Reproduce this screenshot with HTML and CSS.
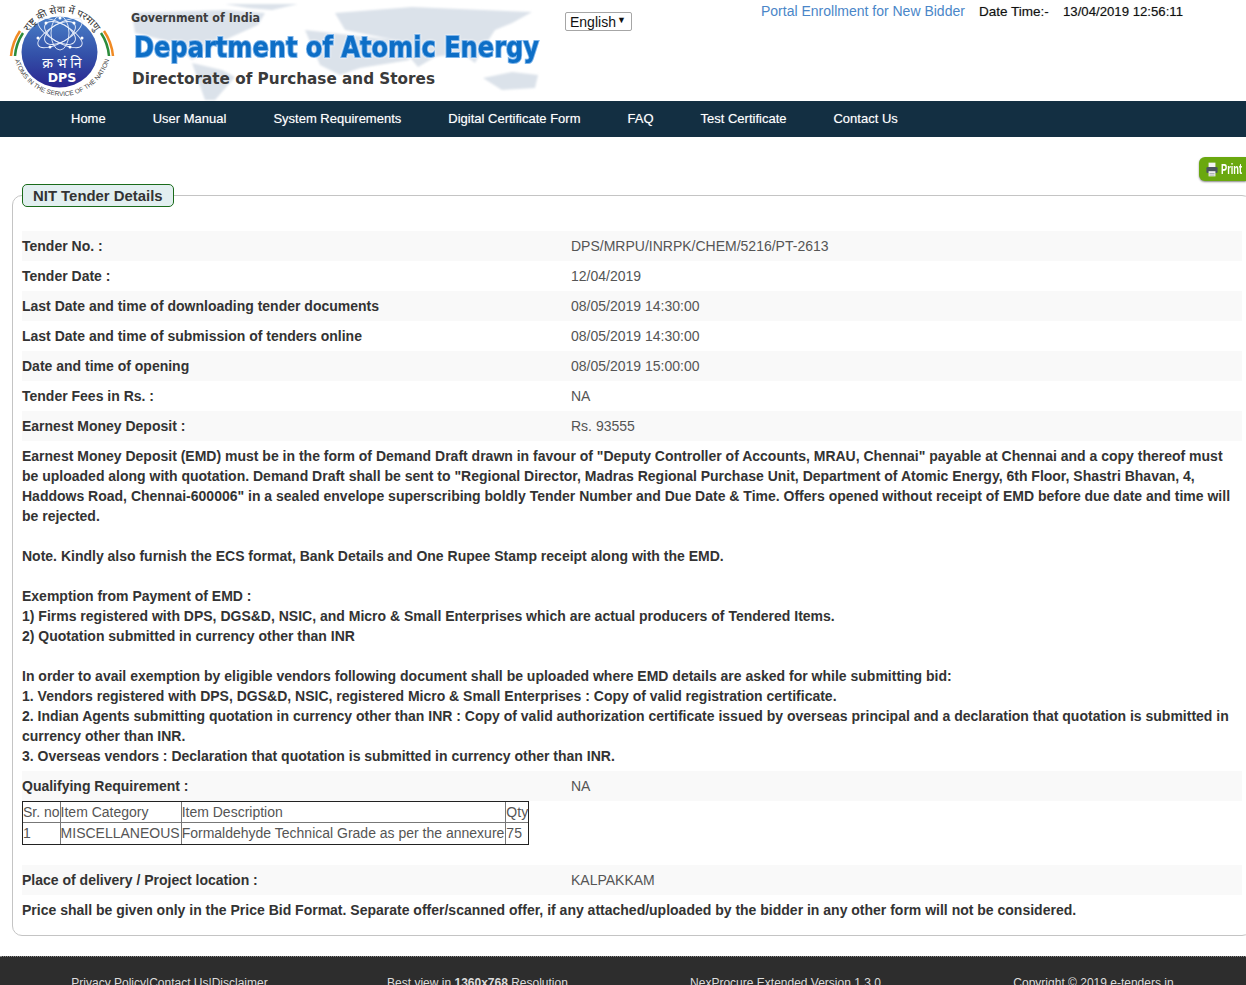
FILE: index.html
```html
<!DOCTYPE html>
<html lang="en">
<head>
<meta charset="utf-8">
<title>NIT Tender Details</title>
<link rel="stylesheet" href="styles.css">
</head>
<body>
<header class="top">
  <svg class="banner" width="545" height="101" viewBox="0 0 545 101" role="img" aria-label="Department of Atomic Energy">
    <defs>
      <linearGradient id="disc" x1="0" y1="0" x2="0" y2="1">
        <stop offset="0" stop-color="#4a7fc8"/>
        <stop offset="0.55" stop-color="#3350a8"/>
        <stop offset="1" stop-color="#2a2590"/>
      </linearGradient>
      <filter id="soft"><feGaussianBlur stdDeviation="0.8"/></filter>
      <path id="arcTop" d="M23 52 A39 39 0 0 1 101 52"/>
      <path id="arcBottom" d="M13 46 A49 50 0 0 0 111 46"/>
    </defs>
    <g class="map" filter="url(#soft)">
      <path d="M225 4 L298 4 L272 10 L248 8 Z"/>
      <path d="M132 13 L225 10 L265 13 L258 25 L218 43 L192 60 L175 43 L135 33 Z"/>
      <path d="M192 63 L222 70 L235 77 L215 100 L205 100 Z"/>
      <path d="M335 13 L412 7 L532 12 L512 23 L495 30 L482 50 L475 63 L462 53 L435 57 L418 67 L395 40 L345 30 Z"/>
      <path d="M305 30 L395 40 L410 60 L360 68 L340 75 L320 65 Z"/>
      <path d="M483 78 L512 72 L538 75 L535 88 L502 90 Z"/>
    </g>
    <g class="logo">
      <path class="arc-orange" d="M11 56 A52 52 0 0 1 20 31"/>
      <path class="arc-green" d="M15 56 A48 48 0 0 1 23 33"/>
      <path class="arc-orange" d="M104 31 A52 52 0 0 1 113 56"/>
      <path class="arc-green" d="M101 33 A48 48 0 0 1 109 56"/>
      <ellipse cx="59.500" cy="52" rx="38" ry="35.500" fill="url(#disc)"/>
      <g class="orbits">
        <ellipse cx="60" cy="33" rx="9" ry="17"/>
        <ellipse cx="60" cy="33" rx="9" ry="17" transform="rotate(60 60 33)"/>
        <ellipse cx="60" cy="33" rx="9" ry="17" transform="rotate(120 60 33)"/>
        <ellipse cx="60" cy="33" rx="25" ry="9" transform="rotate(30 60 33)"/>
        <ellipse cx="60" cy="33" rx="25" ry="9" transform="rotate(150 60 33)"/>
      </g>
      <g class="dots">
        <circle cx="60" cy="18" r="1.500"/><circle cx="46" cy="23" r="1.500"/><circle cx="74" cy="23" r="1.500"/>
        <circle cx="38" cy="38" r="1.500"/><circle cx="82" cy="38" r="1.500"/><circle cx="50" cy="47" r="1.500"/><circle cx="70" cy="47" r="1.500"/>
      </g>
      <text class="logo-hi" x="62" y="68" text-anchor="middle">क्र भं नि</text>
      <text class="logo-dps" x="62" y="82" text-anchor="middle">DPS</text>
      <text class="logo-top"><textPath href="#arcTop" startOffset="50%" text-anchor="middle">राष्ट्र की सेवा में परमाणु</textPath></text>
      <text class="logo-bottom"><textPath href="#arcBottom" startOffset="50%" text-anchor="middle">ATOMS IN THE SERVICE OF THE NATION</textPath></text>
    </g>
    <text class="gov" x="131" y="22" textLength="129" lengthAdjust="spacingAndGlyphs">Government of India</text>
    <text class="dept" x="134" y="57" textLength="405" lengthAdjust="spacingAndGlyphs">Department of Atomic Energy</text>
    <text class="dir" x="132" y="84" textLength="303" lengthAdjust="spacingAndGlyphs">Directorate of Purchase and Stores</text>
  </svg>
  <div class="lang">
    <select class="lang-select" aria-label="Language"><option>English</option></select>
  </div>
  <div class="top-info">
    <a class="enroll" href="#">Portal Enrollment for New Bidder</a>
    <span class="dt-label">Date Time:-</span>
    <span class="dt-value">13/04/2019 12:56:11</span>
  </div>
</header>
<nav class="nav">
  <a href="#">Home</a>
  <a href="#">User Manual</a>
  <a href="#">System Requirements</a>
  <a href="#">Digital Certificate Form</a>
  <a href="#">FAQ</a>
  <a href="#">Test Certificate</a>
  <a href="#">Contact Us</a>
</nav>
<main class="main">
  <div class="print-row">
    <a class="print" href="#">
      <svg class="print-icon" width="12" height="17" viewBox="0 0 14 18" aria-hidden="true">
        <rect x="3" y="1" width="8" height="6" fill="#f4f4f4"/>
        <rect x="0.500" y="6" width="13" height="7" rx="1.500" fill="#4b5560"/>
        <rect x="3" y="11" width="8" height="6" fill="#f4f4f4"/>
        <rect x="4" y="13" width="6" height="1" fill="#9aa0a6"/>
        <rect x="4" y="15" width="6" height="1" fill="#9aa0a6"/>
      </svg>
      <span class="print-text">Print</span>
    </a>
  </div>
  <fieldset class="panel">
    <legend class="panel-title">NIT Tender Details</legend>
    <div class="row stripe"><div class="label">Tender No. :</div><div class="value">DPS/MRPU/INRPK/CHEM/5216/PT-2613</div></div>
    <div class="row"><div class="label">Tender Date :</div><div class="value">12/04/2019</div></div>
    <div class="row stripe"><div class="label">Last Date and time of downloading tender documents</div><div class="value">08/05/2019 14:30:00</div></div>
    <div class="row"><div class="label">Last Date and time of submission of tenders online</div><div class="value">08/05/2019 14:30:00</div></div>
    <div class="row stripe"><div class="label">Date and time of opening</div><div class="value">08/05/2019 15:00:00</div></div>
    <div class="row"><div class="label">Tender Fees in Rs. :</div><div class="value">NA</div></div>
    <div class="row stripe"><div class="label">Earnest Money Deposit :</div><div class="value">Rs. 93555</div></div>
    <p class="notes">Earnest Money Deposit (EMD) must be in the form of Demand Draft drawn in favour of "Deputy Controller of Accounts, MRAU, Chennai" payable at Chennai and a copy thereof must<br>
be uploaded along with quotation. Demand Draft shall be sent to "Regional Director, Madras Regional Purchase Unit, Department of Atomic Energy, 6th Floor, Shastri Bhavan, 4,<br>
Haddows Road, Chennai-600006" in a sealed envelope superscribing boldly Tender Number and Due Date &amp; Time. Offers opened without receipt of EMD before due date and time will<br>
be rejected.<br>
<br>
Note. Kindly also furnish the ECS format, Bank Details and One Rupee Stamp receipt along with the EMD.<br>
<br>
Exemption from Payment of EMD :<br>
1) Firms registered with DPS, DGS&amp;D, NSIC, and Micro &amp; Small Enterprises which are actual producers of Tendered Items.<br>
2) Quotation submitted in currency other than INR<br>
<br>
In order to avail exemption by eligible vendors following document shall be uploaded where EMD details are asked for while submitting bid:<br>
1. Vendors registered with DPS, DGS&amp;D, NSIC, registered Micro &amp; Small Enterprises : Copy of valid registration certificate.<br>
2. Indian Agents submitting quotation in currency other than INR : Copy of valid authorization certificate issued by overseas principal and a declaration that quotation is submitted in<br>
currency other than INR.<br>
3. Overseas vendors : Declaration that quotation is submitted in currency other than INR.</p>
    <div class="row stripe"><div class="label">Qualifying Requirement :</div><div class="value">NA</div></div>
    <table class="items">
      <tr><td>Sr. no</td><td>Item Category</td><td>Item Description</td><td>Qty</td></tr>
      <tr><td>1</td><td>MISCELLANEOUS</td><td>Formaldehyde Technical Grade as per the annexure</td><td>75</td></tr>
    </table>
    <div class="row stripe row-after-table"><div class="label">Place of delivery / Project location :</div><div class="value">KALPAKKAM</div></div>
    <div class="row"><div class="label wide">Price shall be given only in the Price Bid Format. Separate offer/scanned offer, if any attached/uploaded by the bidder in any other form will not be considered.</div></div>
  </fieldset>
</main>
<footer class="footer">
  <div class="foot-col"><a href="#">Privacy Policy</a>|<a href="#">Contact Us</a>|<a href="#">Disclaimer</a></div>
  <div class="foot-col">Best view in <b>1360x768</b> Resolution</div>
  <div class="foot-col">NexProcure Extended Version 1.3.0</div>
  <div class="foot-col">Copyright © 2019 e-tenders.in</div>
</footer>
</body>
</html>
```
FILE: styles.css
```css
html, body {
  margin: 0;
  height: 985px;
  overflow: hidden;
}
body {
  font-family: "Liberation Sans", Arial, sans-serif;
  font-size: 14px;
  color: #333;
  background: #fff;
}
a { color: inherit; text-decoration: none; }

/* header */
.top {
  display: flex;
  align-items: flex-start;
  height: 101px;
}
.banner { flex: none; display: block; }
.map path { fill: #dbe2ea; }
.arc-orange, .arc-green { fill: none; stroke-width: 2.500; }
.arc-orange { stroke: #f08a24; }
.arc-green { stroke: #2c8c3c; }
.orbits ellipse { fill: none; stroke: #e8eefa; stroke-width: 0.900; }
.dots circle { fill: #fff; }
.logo-hi { font-family: "Noto Sans", "DejaVu Sans", sans-serif; font-size: 14px; fill: #fff; }
.logo-dps { font-family: "DejaVu Sans", sans-serif; font-weight: 700; font-size: 12.500px; fill: #fff; }
.logo-top { font-family: "Noto Sans", "DejaVu Sans", sans-serif; font-size: 10px; fill: #333; }
.logo-bottom { font-family: "Liberation Sans", sans-serif; font-size: 6.500px; fill: #444; }
.gov { font-family: "DejaVu Sans", sans-serif; font-weight: 700; font-size: 11.500px; fill: #3d3d3d; }
.dept {
  font-family: "DejaVu Sans", sans-serif;
  font-weight: 700;
  font-size: 28px;
  fill: #0d6ec6;
  stroke: #7db4ea;
  stroke-width: 2;
  paint-order: stroke;
  filter: drop-shadow(0 0 1px #fff);
}
.dir { font-family: "DejaVu Sans", sans-serif; font-weight: 700; font-size: 16.500px; fill: #3a3a3a; }
.lang { margin: 12px 0 0 20px; flex: none; position: relative; }
.lang::after {
  content: "▼";
  position: absolute;
  right: 6px;
  top: 3px;
  font-size: 9px;
  color: #111;
  pointer-events: none;
}
.lang-select {
  display: block;
  appearance: none;
  width: 67px;
  height: 19px;
  padding: 0 0 0 4px;
  border: 1px solid #a6a6a6;
  border-radius: 2px;
  background: #fff;
  color: #111;
  font: 14px "Liberation Sans", Arial, sans-serif;
}
.top-info {
  display: flex;
  margin: 4px 0 0 129px;
  line-height: 16px;
  color: #111;
  white-space: nowrap;
}
.enroll { color: #4a86c8; width: 218px; margin-top: -1px; }
.dt-label { width: 84px; font-size: 13.500px; text-shadow: 0 0 1px rgba(0, 0, 0, .35); }
.dt-value { font-size: 13.200px; text-shadow: 0 0 1px rgba(0, 0, 0, .35); }

/* nav */
.nav {
  display: flex;
  gap: 47px;
  height: 36px;
  padding-left: 71px;
  background: #132f42;
  color: #fff;
  font-size: 13px;
  line-height: 35px;
  text-shadow: 0 0 1px rgba(255, 255, 255, .45);
}

/* main */
.main { padding-top: 20px; }
.print-row { display: flex; justify-content: flex-end; height: 27px; }
.print {
  display: flex;
  align-items: center;
  gap: 2px;
  width: 47px;
  height: 24px;
  padding-left: 7px;
  box-sizing: border-box;
  overflow: hidden;
  border-radius: 6px 0 0 6px;
  background: #6aa80f;
  box-shadow: 0 1px 2px #888;
  color: #fff;
  font-weight: 700;
  font-size: 14px;
}
.print-icon { flex: none; }
.print-text {
  flex: none;
  margin-left: 1px;
  transform: scaleX(.66);
  transform-origin: left center;
}
.panel {
  margin: 0 -6px 0 12px;
  padding: 24px 9px 10px;
  min-width: 0;
  border: 1px solid #c4c4c4;
  border-radius: 10px;
}
.panel-title {
  margin: 0 13px 0 0;
  padding: 0 10px;
  height: 21px;
  line-height: 23px;
  border: 1px solid #1a6b1a;
  border-radius: 5px;
  background: #e2eff0;
  color: #333;
  font-weight: 700;
  font-size: 14.900px;
}
.row {
  display: grid;
  grid-template-columns: 549px 1fr;
  height: 30px;
  line-height: 30px;
  color: #555;
}
.stripe { background: #f9f9f9; }
.label { color: #333; font-weight: 700; white-space: nowrap; }
.notes {
  margin: 0;
  padding: 5px 0;
  line-height: 20px;
  color: #333;
  font-weight: 700;
  white-space: nowrap;
}
.items {
  border-collapse: separate;
  border-spacing: 0;
  border: 1px solid #222;
  color: #555;
  line-height: 20px;
}
.items td { padding: 0; border-left: 1px solid #777; border-top: 1px solid #777; white-space: nowrap; }
.items td:nth-child(2), .items td:nth-child(3) { padding-right: 1px; }
.items tr:first-child td { border-top: 0; }
.items tr:last-child td { padding-bottom: 1px; }
.items td:first-child { border-left: 0; }
.row-after-table { margin-top: 20px; }

/* footer */
.footer {
  box-sizing: border-box;
  height: 60px;
  margin-top: 20px;
  padding: 19px 0 0 15.500px;
  display: grid;
  grid-template-columns: repeat(4, 308px);
  border-top: 1px dotted #888;
  background: #2d2d2d;
  color: #ddd;
  font-size: 12px;
  text-align: center;
}
```
